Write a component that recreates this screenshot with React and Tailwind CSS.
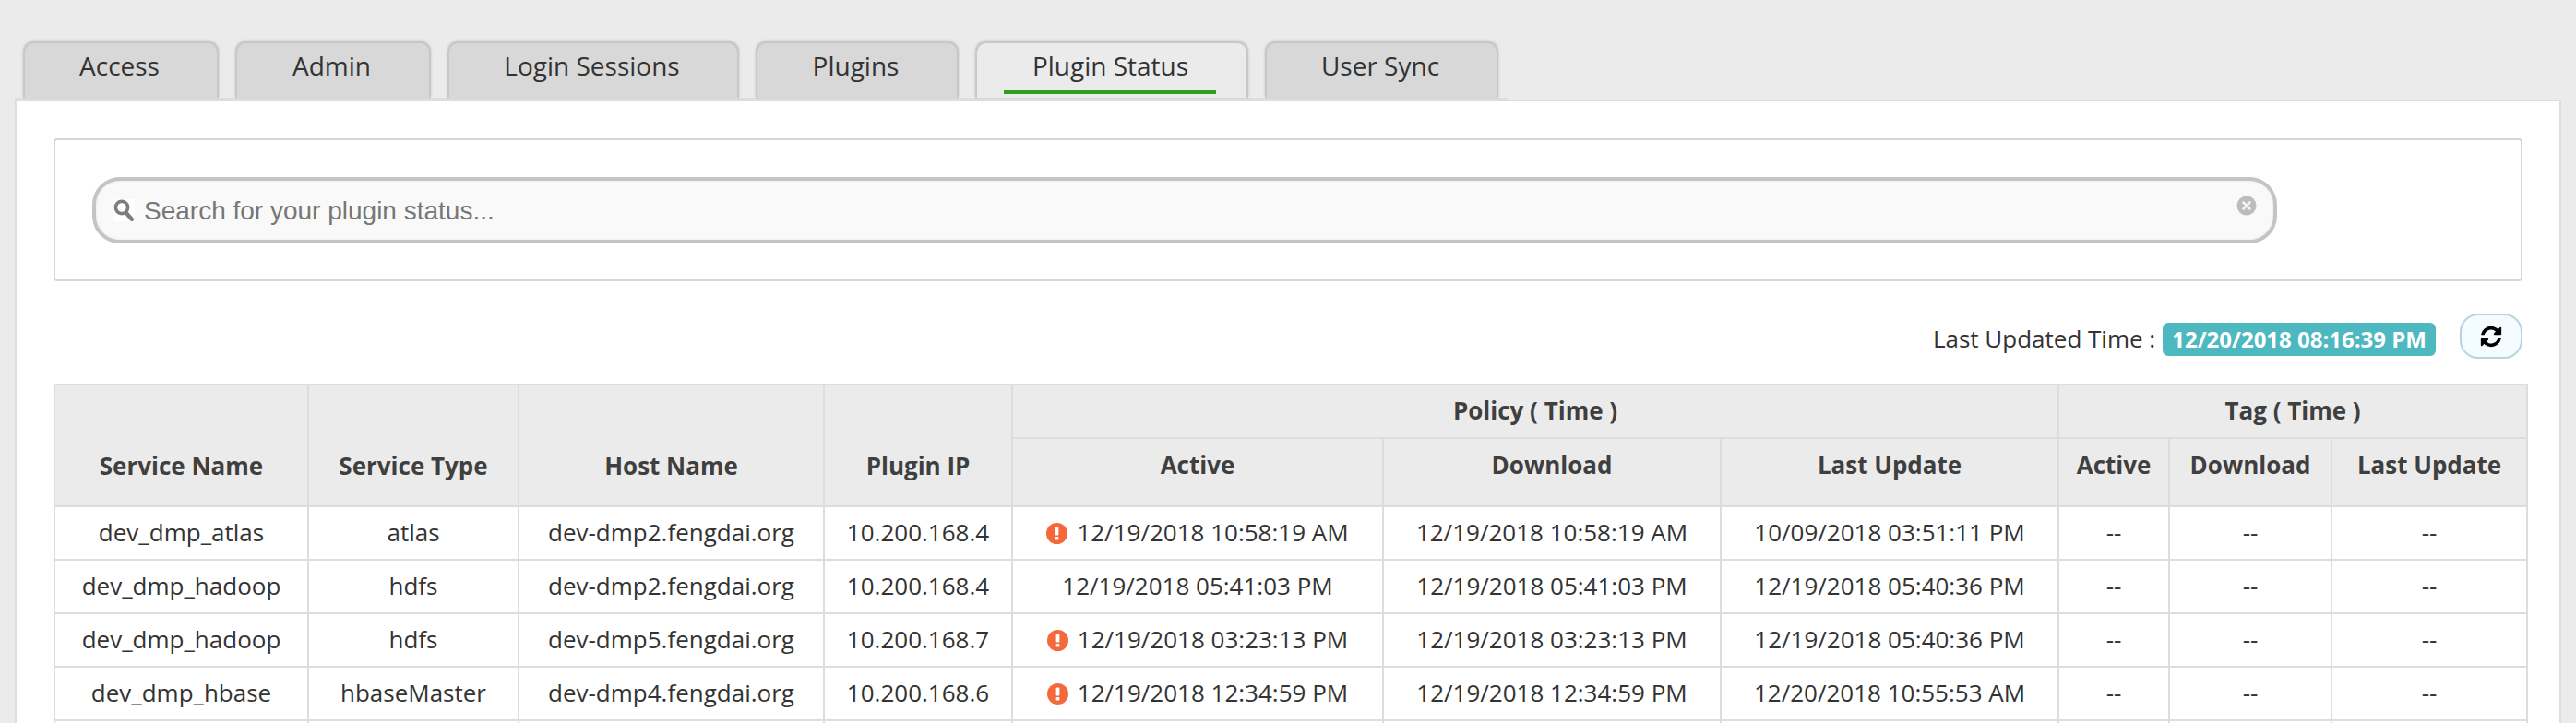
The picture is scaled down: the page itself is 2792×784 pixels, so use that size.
const tabs = [
  { label: "Access", width: "w-[212px]" },
  { label: "Admin", width: "w-[212px]" },
  { label: "Login Sessions", width: "w-[316px]" },
  { label: "Plugins", width: "w-[220px]" },
  { label: "Plugin Status", width: "w-[296px]", active: true },
  { label: "User Sync", width: "w-[253px]" },
];

const rows = [
  ["dev_dmp_atlas", "atlas", "dev-dmp2.fengdai.org", "10.200.168.4", "12/19/2018 10:58:19 AM", true, "12/19/2018 10:58:19 AM", "10/09/2018 03:51:11 PM"],
  ["dev_dmp_hadoop", "hdfs", "dev-dmp2.fengdai.org", "10.200.168.4", "12/19/2018 05:41:03 PM", false, "12/19/2018 05:41:03 PM", "12/19/2018 05:40:36 PM"],
  ["dev_dmp_hadoop", "hdfs", "dev-dmp5.fengdai.org", "10.200.168.7", "12/19/2018 03:23:13 PM", true, "12/19/2018 03:23:13 PM", "12/19/2018 05:40:36 PM"],
  ["dev_dmp_hbase", "hbaseMaster", "dev-dmp4.fengdai.org", "10.200.168.6", "12/19/2018 12:34:59 PM", true, "12/19/2018 12:34:59 PM", "12/20/2018 10:55:53 AM"],
];

const colWidths = ["w-[275px]", "w-[228px]", "w-[331px]", "w-[204px]", "w-[402px]", "w-[366px]", "w-[366px]", "w-[120px]", "w-[176px]", "w-[212px]"];

const th = "border-2 border-[#dddddd] bg-[#ebebeb] text-center align-middle font-bold text-[#3f3f3f]";
const td = "h-[58px] border-2 border-[#dddddd] px-0 pt-0 pb-[1px] text-center align-middle";

const WarnIcon = () => (
  <svg viewBox="0 0 22 22" className="mr-[10px] inline-block h-[23px] w-[23px] align-[-3px]">
    <circle cx="11" cy="11" r="11" fill="#f4683a" />
    <rect x="9.2" y="4.2" width="3.6" height="8.8" rx="1" fill="#fff" />
    <rect x="9.2" y="14.4" width="3.6" height="3.4" rx="0.8" fill="#fff" />
  </svg>
);

const SearchBar = () => (
  <div className="flex h-[72px] w-[2368px] items-center rounded-[30px] border-4 border-[#c4c4c4] bg-[#f9f9f9] pl-[18px] pr-[18px] shadow-[inset_0_0_3px_rgba(0,0,0,0.08)]">
    <span className="flex h-[24px] w-[24px] items-center justify-center bg-white">
      <svg viewBox="0 0 24 24" className="h-[24px] w-[24px]" fill="none" stroke="#7d7d7d">
        <circle cx="10" cy="9" r="6.6" strokeWidth="3.6" />
        <path d="M14.5 14.5 L21 22" strokeWidth="4.2" strokeLinecap="round" />
      </svg>
    </span>
    <span className="ml-[10px] pt-[2px] font-['Liberation_Sans',Arial,sans-serif] text-[28px] text-[#777777]">
      Search for your plugin status...
    </span>
    <svg viewBox="0 0 22 22" className="mb-[11px] ml-auto h-[22px] w-[22px]">
      <circle cx="11" cy="11" r="10.5" fill="#bcbcbc" />
      <path d="M7.5 7.5 L14.5 14.5 M14.5 7.5 L7.5 14.5" stroke="#f4f4f4" strokeWidth="2.6" strokeLinecap="round" />
    </svg>
  </div>
);

const App = () => (
  <div className="h-[784px] overflow-hidden bg-[#ebebeb] pt-[45px] font-['Open_Sans',sans-serif] text-[26px] text-[#333333]">
    <div className="relative z-10 ml-[16px] flex w-fit gap-[18px] border-b-4 border-[#dddddd] pl-[9px] pr-[10px]">
      {tabs.map((tab) => (
        <div
          key={tab.label}
          className={`relative flex h-[61px] justify-center rounded-t-[12px] border-2 border-b-0 border-[#c8c8c8] pr-[3px] pt-[5px] text-[28px] leading-[38px] shadow-[0_-1px_3px_rgba(0,0,0,0.18)] ${tab.width} ${
            tab.active ? "bg-[#ebebeb]" : "bg-[#d8d8d8]"
          }`}
        >
          {tab.label}
          {tab.active && (
            <span className="absolute bottom-[4px] left-[29px] right-[33px] h-[4px] bg-[#2f9e1c]" />
          )}
        </div>
      ))}
    </div>

    <div className="mx-[16px] -mt-[2px] h-[700px] border-x-2 border-t-2 border-[#dddddd] bg-white px-[40px] pt-[40px]">
      <div className="h-[155px] rounded-[4px] border-2 border-[#d6d6d6] px-[40px] pt-[40px]">
        <SearchBar />
      </div>

      <div className="mt-[35px] flex h-[49px] items-center justify-end">
        <span className="mt-[6px]">Last Updated Time :</span>
        <span className="ml-[8px] mt-[7px] flex h-[36px] items-center rounded-[6px] bg-[#4eb8c0] px-[10px] text-[24px] font-bold text-white">
          12/20/2018 08:16:39 PM
        </span>
        <button
          type="button"
          className="ml-[26px] flex h-[49px] w-[68px] items-center justify-center rounded-[20px] border-2 border-[#b8d4de] bg-[#f5fcff]"
        >
          <svg viewBox="0 0 1792 1792" className="h-[26px] w-[26px]" fill="#000000">
            <path d="M1639 1056q0 5-1 7-64 268-268 434.500t-478 166.500q-146 0-282.500-55t-243.500-157l-129 129q-19 19-45 19t-45-19-19-45v-448q0-26 19-45t45-19h448q26 0 45 19t19 45-19 45l-137 137q71 66 161 102t187 36q134 0 250-65t186-179q11-17 53-117 8-23 30-23h192q13 0 22.500 9.500t9.500 22.500zm25-800v448q0 26-19 45t-45 19h-448q-26 0-45-19t-19-45 19-45l138-138q-148-137-349-137-134 0-250 65t-186 179q-11 17-53 117-8 23-30 23h-199q-13 0-22.500-9.500t-9.500-22.500v-7q65-268 270-434.500t480-166.500q146 0 284 55.500t245 156.500l130-129q19-19 45-19t45 19 19 45z" />
          </svg>
        </button>
      </div>

      <table className="mt-[27px] w-[2680px] table-fixed border-collapse">
        <colgroup>
          {colWidths.map((w, i) => (
            <col key={i} className={w} />
          ))}
        </colgroup>
        <thead>
          <tr className="h-[58px]">
            <th rowSpan={2} className={`${th} pt-[44px]`}>Service Name</th>
            <th rowSpan={2} className={`${th} pt-[44px]`}>Service Type</th>
            <th rowSpan={2} className={`${th} pt-[44px]`}>Host Name</th>
            <th rowSpan={2} className={`${th} pt-[44px]`}>Plugin IP</th>
            <th colSpan={3} className={`${th} pb-[2px]`}>Policy ( Time )</th>
            <th colSpan={3} className={`${th} pb-[2px]`}>Tag ( Time )</th>
          </tr>
          <tr className="h-[74px]">
            {["Active", "Download", "Last Update", "Active", "Download", "Last Update"].map((h, i) => (
              <th key={i} className={`${th} pb-[15px]`}>{h}</th>
            ))}
          </tr>
        </thead>
        <tbody>
          {rows.map((r, i) => (
            <tr key={i}>
              <td className={td}>{r[0]}</td>
              <td className={td}>{r[1]}</td>
              <td className={td}>{r[2]}</td>
              <td className={td}>{r[3]}</td>
              <td className={td}>
                {r[5] && <WarnIcon />}
                {r[4]}
              </td>
              <td className={td}>{r[6]}</td>
              <td className={td}>{r[7]}</td>
              <td className={td}>--</td>
              <td className={td}>--</td>
              <td className={td}>--</td>
            </tr>
          ))}
          <tr>
            {colWidths.map((w, i) => (
              <td key={i} className={td} />
            ))}
          </tr>
        </tbody>
      </table>
    </div>
  </div>
);

export default App;
